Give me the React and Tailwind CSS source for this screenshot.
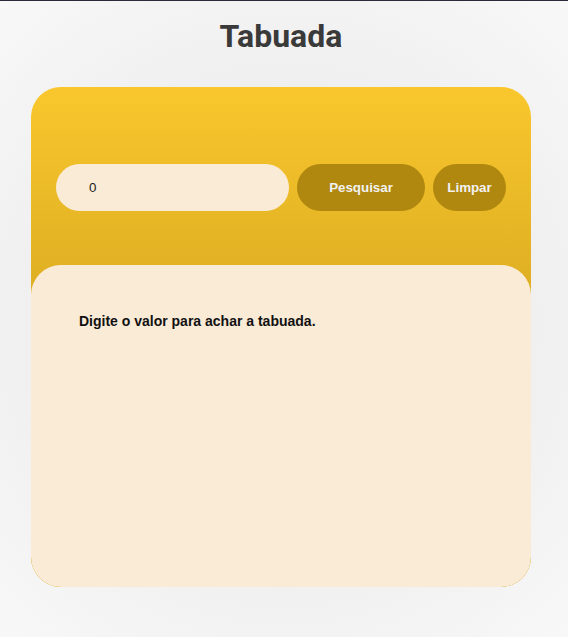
import React from "react";

export default function App() {
  return (
    <div className="min-h-screen w-full border-t border-[#2a2a3a] bg-[radial-gradient(circle_at_50%_50%,#e8e8e8_0%,#f0f0f0_60%,#f8f8f8_100%)] flex flex-col items-center pr-[6px]">
      <h1 className="mt-[15px] text-[32px] leading-[40px] font-bold text-[#3a3a3a] [font-family:Roboto,sans-serif]">
        Tabuada
      </h1>
      <div className="mt-[31px] w-[500px] h-[500px] rounded-[30px] overflow-hidden flex flex-col bg-[linear-gradient(to_bottom,#f9c72d_0%,#dcac22_45%,#d8a820_100%)] [font-family:'Liberation_Sans',Arial,sans-serif]">
        <div className="h-[178px] shrink-0 flex items-start gap-[8px] px-[25px] pt-[77px]">
          <div className="w-[233px] h-[47px] rounded-full bg-[#faebd7] flex items-center pl-[33px] text-[13.33px] text-[#222]">
            0
          </div>
          <button className="w-[128px] h-[47px] rounded-full bg-[#b0880f] text-[#f2f2f2] font-bold text-[13.33px]">
            Pesquisar
          </button>
          <button className="w-[73px] h-[47px] rounded-full bg-[#b0880f] text-[#f2f2f2] font-bold text-[13.33px]">
            Limpar
          </button>
        </div>
        <div className="flex-1 rounded-[30px] bg-[#faebd7] pt-[48px] pl-[48px]">
          <p className="text-[14px] font-bold text-[#111] leading-[16px]">
            Digite o valor para achar a tabuada.
          </p>
        </div>
      </div>
    </div>
  );
}
